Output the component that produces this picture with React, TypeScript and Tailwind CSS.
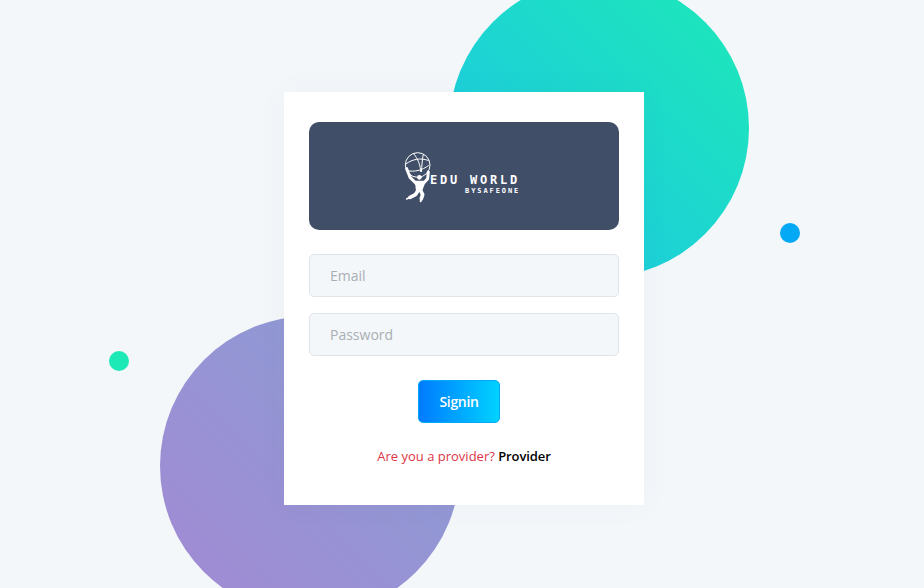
export default function App() {
  return (
    <div className="relative h-[588px] overflow-hidden bg-[#f4f7fa] font-['Open_Sans',sans-serif]">
      <div className="absolute left-[449px] top-[-22px] h-[300px] w-[300px] rounded-full bg-[linear-gradient(-135deg,#1de9b6_0%,#1dc4e9_100%)]" />
      <div className="absolute left-[160px] top-[316px] h-[300px] w-[300px] rounded-full bg-[linear-gradient(-135deg,#899fd4_0%,#a389d4_100%)]" />
      <div className="absolute left-[780px] top-[223px] h-5 w-5 rounded-full bg-[#04a9f5]" />
      <div className="absolute left-[109px] top-[351px] h-5 w-5 rounded-full bg-[#1de9b6]" />
      <div className="relative flex justify-center pl-1 pt-[92px]">
        <div className="flex h-[413px] w-[360px] flex-col items-center bg-white px-[25px] pt-[30px] shadow-[0_0_30px_rgba(65,76,102,0.04)]">
          <div className="flex h-[108px] w-[310px] items-start justify-center rounded-[10px] bg-[#414e68] pr-2 pt-[26px]">
            <svg width="30" height="54" viewBox="0 0 90 162" className="overflow-visible">
              <g fill="none" stroke="#fff" strokeWidth="3">
                <circle cx="53" cy="51" r="37" />
                <path d="M18 48c18-14 44-20 68-10M22 68c20 4 44 0 64-16M40 16c14 16 22 38 22 56M70 18c-4 18-4 36-6 54" />
              </g>
              <g fill="none" stroke="#fff" strokeLinejoin="round" strokeLinecap="round">
                <path strokeWidth="9" d="M20 62L30 88L44 102" />
                <path strokeWidth="9" d="M85 72L83 92L72 104" />
                <path strokeWidth="11" d="M55 126L46 140L30 148" />
                <path strokeWidth="5" d="M30 148L20 153" />
                <path strokeWidth="11" d="M61 126L68 140L64 152" />
                <path strokeWidth="6" d="M64 152L62 160" />
              </g>
              <circle cx="58" cy="88" r="7" fill="#fff" />
              <path fill="#fff" d="M38 98L78 98L72 114L66 130L48 130L46 112z" />
            </svg>
            <div className="flex flex-col items-end pt-[25px] font-['DejaVu_Sans_Mono',monospace] font-bold text-white">
              <span className="h-[14px] text-[12px] leading-[14px] tracking-[2.8px]">EDU WORLD</span>
              <span className="h-[8px] text-[7px] leading-[8px] tracking-[1.9px]">BYSAFEONE</span>
            </div>
          </div>
          <input
            placeholder="Email"
            className="mt-6 h-[43px] w-[310px] rounded-[5px] border border-[#e0e3e8] bg-[#f4f7fa] px-5 text-sm text-[#495057] outline-none placeholder:text-[#a9aeb3]"
          />
          <input
            placeholder="Password"
            className="mt-4 h-[43px] w-[310px] rounded-[5px] border border-[#e0e3e8] bg-[#f4f7fa] px-5 text-sm text-[#495057] outline-none placeholder:text-[#a9aeb3]"
          />
          <button className="mt-6 mr-[10px] h-[43px] w-[82px] rounded-[5px] border border-[#04a9f5] bg-[linear-gradient(to_right,#007bff,#00d2ff)] text-sm font-semibold tracking-[-0.3px] text-white">
            Signin
          </button>
          <p className="mt-6 text-[13px] leading-[18px] text-[#dc3545]">
            Are you a provider? <span className="font-semibold tracking-[-0.1px] text-black">Provider</span>
          </p>
        </div>
      </div>
    </div>
  );
}
